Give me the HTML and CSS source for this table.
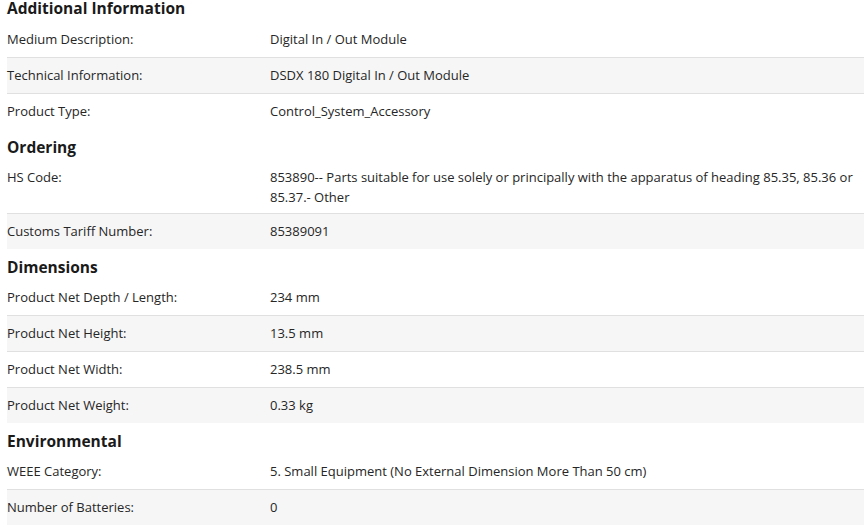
FILE: index.html
```html
<!DOCTYPE html>
<html lang="en">
<head>
<meta charset="utf-8">
<title>Product details</title>
<link rel="stylesheet" href="styles.css">
</head>
<body>
<div class="specs">
  <section class="group">
    <h2 class="group-title">Additional Information</h2>
    <div class="row"><div class="label">Medium Description:</div><div class="value">Digital In / Out Module</div></div>
    <div class="row"><div class="label">Technical Information:</div><div class="value">DSDX 180 Digital In / Out Module</div></div>
    <div class="row"><div class="label">Product Type:</div><div class="value">Control_System_Accessory</div></div>
  </section>
  <section class="group">
    <h2 class="group-title">Ordering</h2>
    <div class="row"><div class="label">HS Code:</div><div class="value">853890-- Parts suitable for use solely or principally with the apparatus of heading 85.35, 85.36 or 85.37.- Other</div></div>
    <div class="row"><div class="label">Customs Tariff Number:</div><div class="value">85389091</div></div>
  </section>
  <section class="group">
    <h2 class="group-title">Dimensions</h2>
    <div class="row"><div class="label">Product Net Depth / Length:</div><div class="value">234 mm</div></div>
    <div class="row"><div class="label">Product Net Height:</div><div class="value">13.5 mm</div></div>
    <div class="row"><div class="label">Product Net Width:</div><div class="value">238.5 mm</div></div>
    <div class="row"><div class="label">Product Net Weight:</div><div class="value">0.33 kg</div></div>
  </section>
  <section class="group">
    <h2 class="group-title">Environmental</h2>
    <div class="row"><div class="label">WEEE Category:</div><div class="value">5. Small Equipment (No External Dimension More Than 50 cm)</div></div>
    <div class="row"><div class="label">Number of Batteries:</div><div class="value">0</div></div>
  </section>
</div>
</body>
</html>
```
FILE: styles.css
```css
* { box-sizing: border-box; }
html, body { margin: 0; padding: 0; background: #fff; }
body {
  font-family: "Open Sans", "Noto Sans", sans-serif;
  font-size: 13px;
  color: #262626;
}
.specs { padding-left: 7px; }
.group-title {
  margin: 10px 0 0;
  padding-bottom: 5px;
  font-size: 15.5px;
  line-height: 16px;
  font-weight: 700;
  color: #1a1a1a;
}
.group:first-child .group-title { margin-top: 0; padding-bottom: 6px; }
.row {
  display: flex;
  align-items: flex-start;
  min-height: 36px;
  padding: 7px 0 6px;
  line-height: 20px;
  border-bottom: 1px solid #e0e0e0;
}
.row:nth-of-type(even) { background: #f6f6f6; }
.row:last-child { border-bottom: none; min-height: 35px; }
.label { flex: 0 0 263px; }
.value { flex: 1; padding-right: 8px; }
```
